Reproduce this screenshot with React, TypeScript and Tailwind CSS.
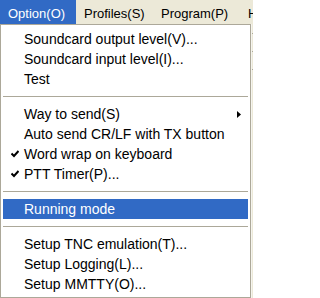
import React from "react";

type Item =
  | { kind: "sep" }
  | { kind: "item"; label: string; checked?: boolean; submenu?: boolean; active?: boolean };

const items: Item[] = [
  { kind: "item", label: "Soundcard output level(V)..." },
  { kind: "item", label: "Soundcard input level(I)..." },
  { kind: "item", label: "Test" },
  { kind: "sep" },
  { kind: "item", label: "Way to send(S)", submenu: true },
  { kind: "item", label: "Auto send CR/LF with TX button" },
  { kind: "item", label: "Word wrap on keyboard", checked: true },
  { kind: "item", label: "PTT Timer(P)...", checked: true },
  { kind: "sep" },
  { kind: "item", label: "Running mode", active: true },
  { kind: "sep" },
  { kind: "item", label: "Setup TNC emulation(T)..." },
  { kind: "item", label: "Setup Logging(L)..." },
  { kind: "item", label: "Setup MMTTY(O)..." },
];

const CheckMark = () => (
  <svg width="8" height="8" viewBox="0 0 8 8" className="block">
    <path d="M0.5 3.5 L3 6 L7.5 1" fill="none" stroke="#000" strokeWidth="2" />
  </svg>
);

const Arrow = () => (
  <svg width="4" height="7" viewBox="0 0 4 7" className="block">
    <path d="M0 0 L4 3.5 L0 7 Z" fill="#000" />
  </svg>
);

const MenuRow = ({ item }: { item: Item }) => {
  if (item.kind === "sep") {
    return (
      <div className="h-[15px] flex items-center px-[2px]">
        <div className="h-px w-full bg-[#ACA899]" />
      </div>
    );
  }
  return (
    <div className="px-[2px]">
      <div
        className={`h-[20px] flex items-center ${
          item.active ? "bg-[#316AC5] text-white" : "text-black"
        }`}
      >
        <div className="w-[21px] flex justify-center pl-[3px]">
          {item.checked && <CheckMark />}
        </div>
        <span className="flex-1 whitespace-nowrap">{item.label}</span>
        <div className="w-[11px] flex justify-start">{item.submenu && <Arrow />}</div>
      </div>
    </div>
  );
};

export default function App() {
  return (
    <div className="w-[253px] h-[298px] overflow-hidden bg-[#ECE9D8] font-['Liberation_Sans',Arial,sans-serif] text-[14px] leading-none">
      {/* menu bar */}
      <div className="h-[24px] flex items-stretch text-black text-[13px] overflow-hidden">
        <div className="w-[76px] shrink-0 pl-[8px] pt-[2px] flex items-center bg-[#316AC5] text-white">Option(O)</div>
        <div className="w-[76px] shrink-0 pl-[8px] pt-[2px] flex items-center">Profiles(S)</div>
        <div className="w-[88px] shrink-0 pl-[9px] pt-[2px] flex items-center">Program(P)</div>
        <div className="w-[13px] shrink-0 pl-[8px] pt-[2px] flex items-center whitespace-nowrap overflow-hidden">H</div>
      </div>

      <div className="flex">
        {/* dropdown */}
        <div className="w-[251px] h-[274px] shrink-0 bg-white border border-[#ACA899] pt-[4px] pb-[3px]">
          {items.map((item, i) => (
            <MenuRow key={i} item={item} />
          ))}
        </div>
        {/* window behind */}
        <div className="flex-1 border-l border-[#F5F4EE] h-[274px]">
          <div className="h-[10px] border-b border-[#ACA899]" />
          <div className="h-[18px] border-b border-[#ACA899]" />
          <div className="h-[18px] border-b border-[#ACA899]" />
        </div>
      </div>
    </div>
  );
}
